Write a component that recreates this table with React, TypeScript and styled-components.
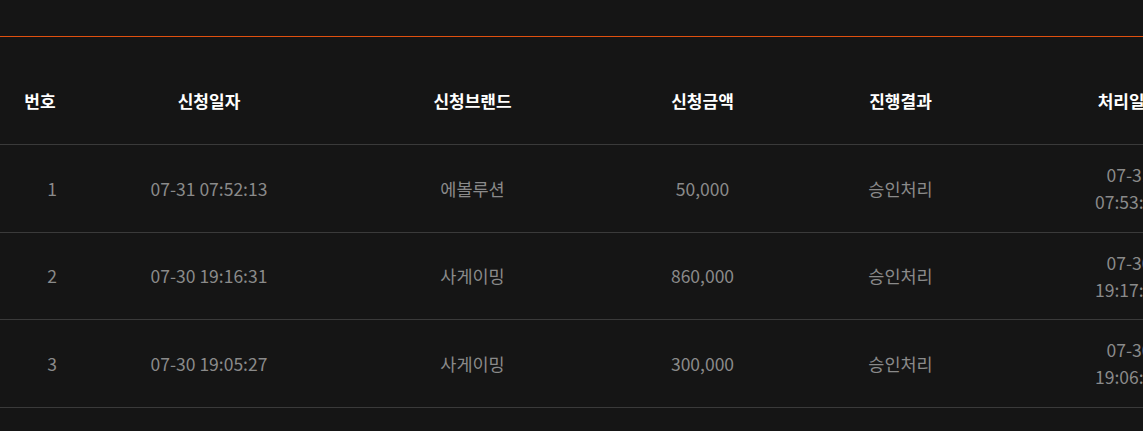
import React from "react";
import styled, { createGlobalStyle } from "styled-components";

const GlobalStyle = createGlobalStyle`
  html, body {
    margin: 0;
    padding: 0;
    background: #151515;
    overflow: hidden;
  }
  body {
    font-family: "Noto Sans CJK KR", "Noto Sans", sans-serif;
  }
`;

const Page = styled.div`
  width: 1143px;
  height: 431px;
  background: #151515;
  padding-top: 36px;
  box-sizing: border-box;
  overflow: hidden;
`;

const Table = styled.table`
  width: 1255px;
  table-layout: fixed;
  border-collapse: collapse;
  border-top: 1px solid #e0500f;
`;

const HeadCell = styled.th`
  padding: 50px 0 30px;
  font-size: 17px;
  line-height: 27px;
  font-weight: 700;
  color: #ffffff;
  text-align: center;
  white-space: nowrap;
  border-bottom: 1px solid #3a3a3a;
`;

const Row = styled.tr`
  border-bottom: 1px solid #3a3a3a;
`;

const Cell = styled.td<{ $indent?: boolean }>`
  padding: 0 0 0 ${(p) => (p.$indent ? "24px" : "0")};
  height: 86.6px;
  font-size: 17.5px;
  line-height: 27px;
  font-weight: 400;
  color: #8a8a8a;
  text-align: center;
  vertical-align: middle;
`;

const Wrap = styled.span<{ $max: number }>`
  display: block;
  max-width: ${(p) => p.$max}px;
  margin: 0 auto;
`;

const widths = [80, 258, 269, 191, 205, 252];
const headers = ["번호", "신청일자", "신청브랜드", "신청금액", "진행결과", "처리일자"];

const rows = [
  ["1", "07-31 07:52:13", "에볼루션", "50,000", "승인처리", "07-31 07:53:15"],
  ["2", "07-30 19:16:31", "사게이밍", "860,000", "승인처리", "07-30 19:17:02"],
  ["3", "07-30 19:05:27", "사게이밍", "300,000", "승인처리", "07-30 19:06:11"],
];

export default function App() {
  return (
    <>
      <GlobalStyle />
      <Page>
        <Table>
          <colgroup>
            {widths.map((w, i) => (
              <col key={i} style={{ width: w }} />
            ))}
          </colgroup>
          <thead>
            <tr>
              {headers.map((h) => (
                <HeadCell key={h}>{h}</HeadCell>
              ))}
            </tr>
          </thead>
          <tbody>
            {rows.map((r) => (
              <Row key={r[0]}>
                {r.map((c, i) => (
                  <Cell key={i} $indent={i === 0}>
                    {i === 5 ? <Wrap $max={95}>{c}</Wrap> : c}
                  </Cell>
                ))}
              </Row>
            ))}
          </tbody>
        </Table>
      </Page>
    </>
  );
}
